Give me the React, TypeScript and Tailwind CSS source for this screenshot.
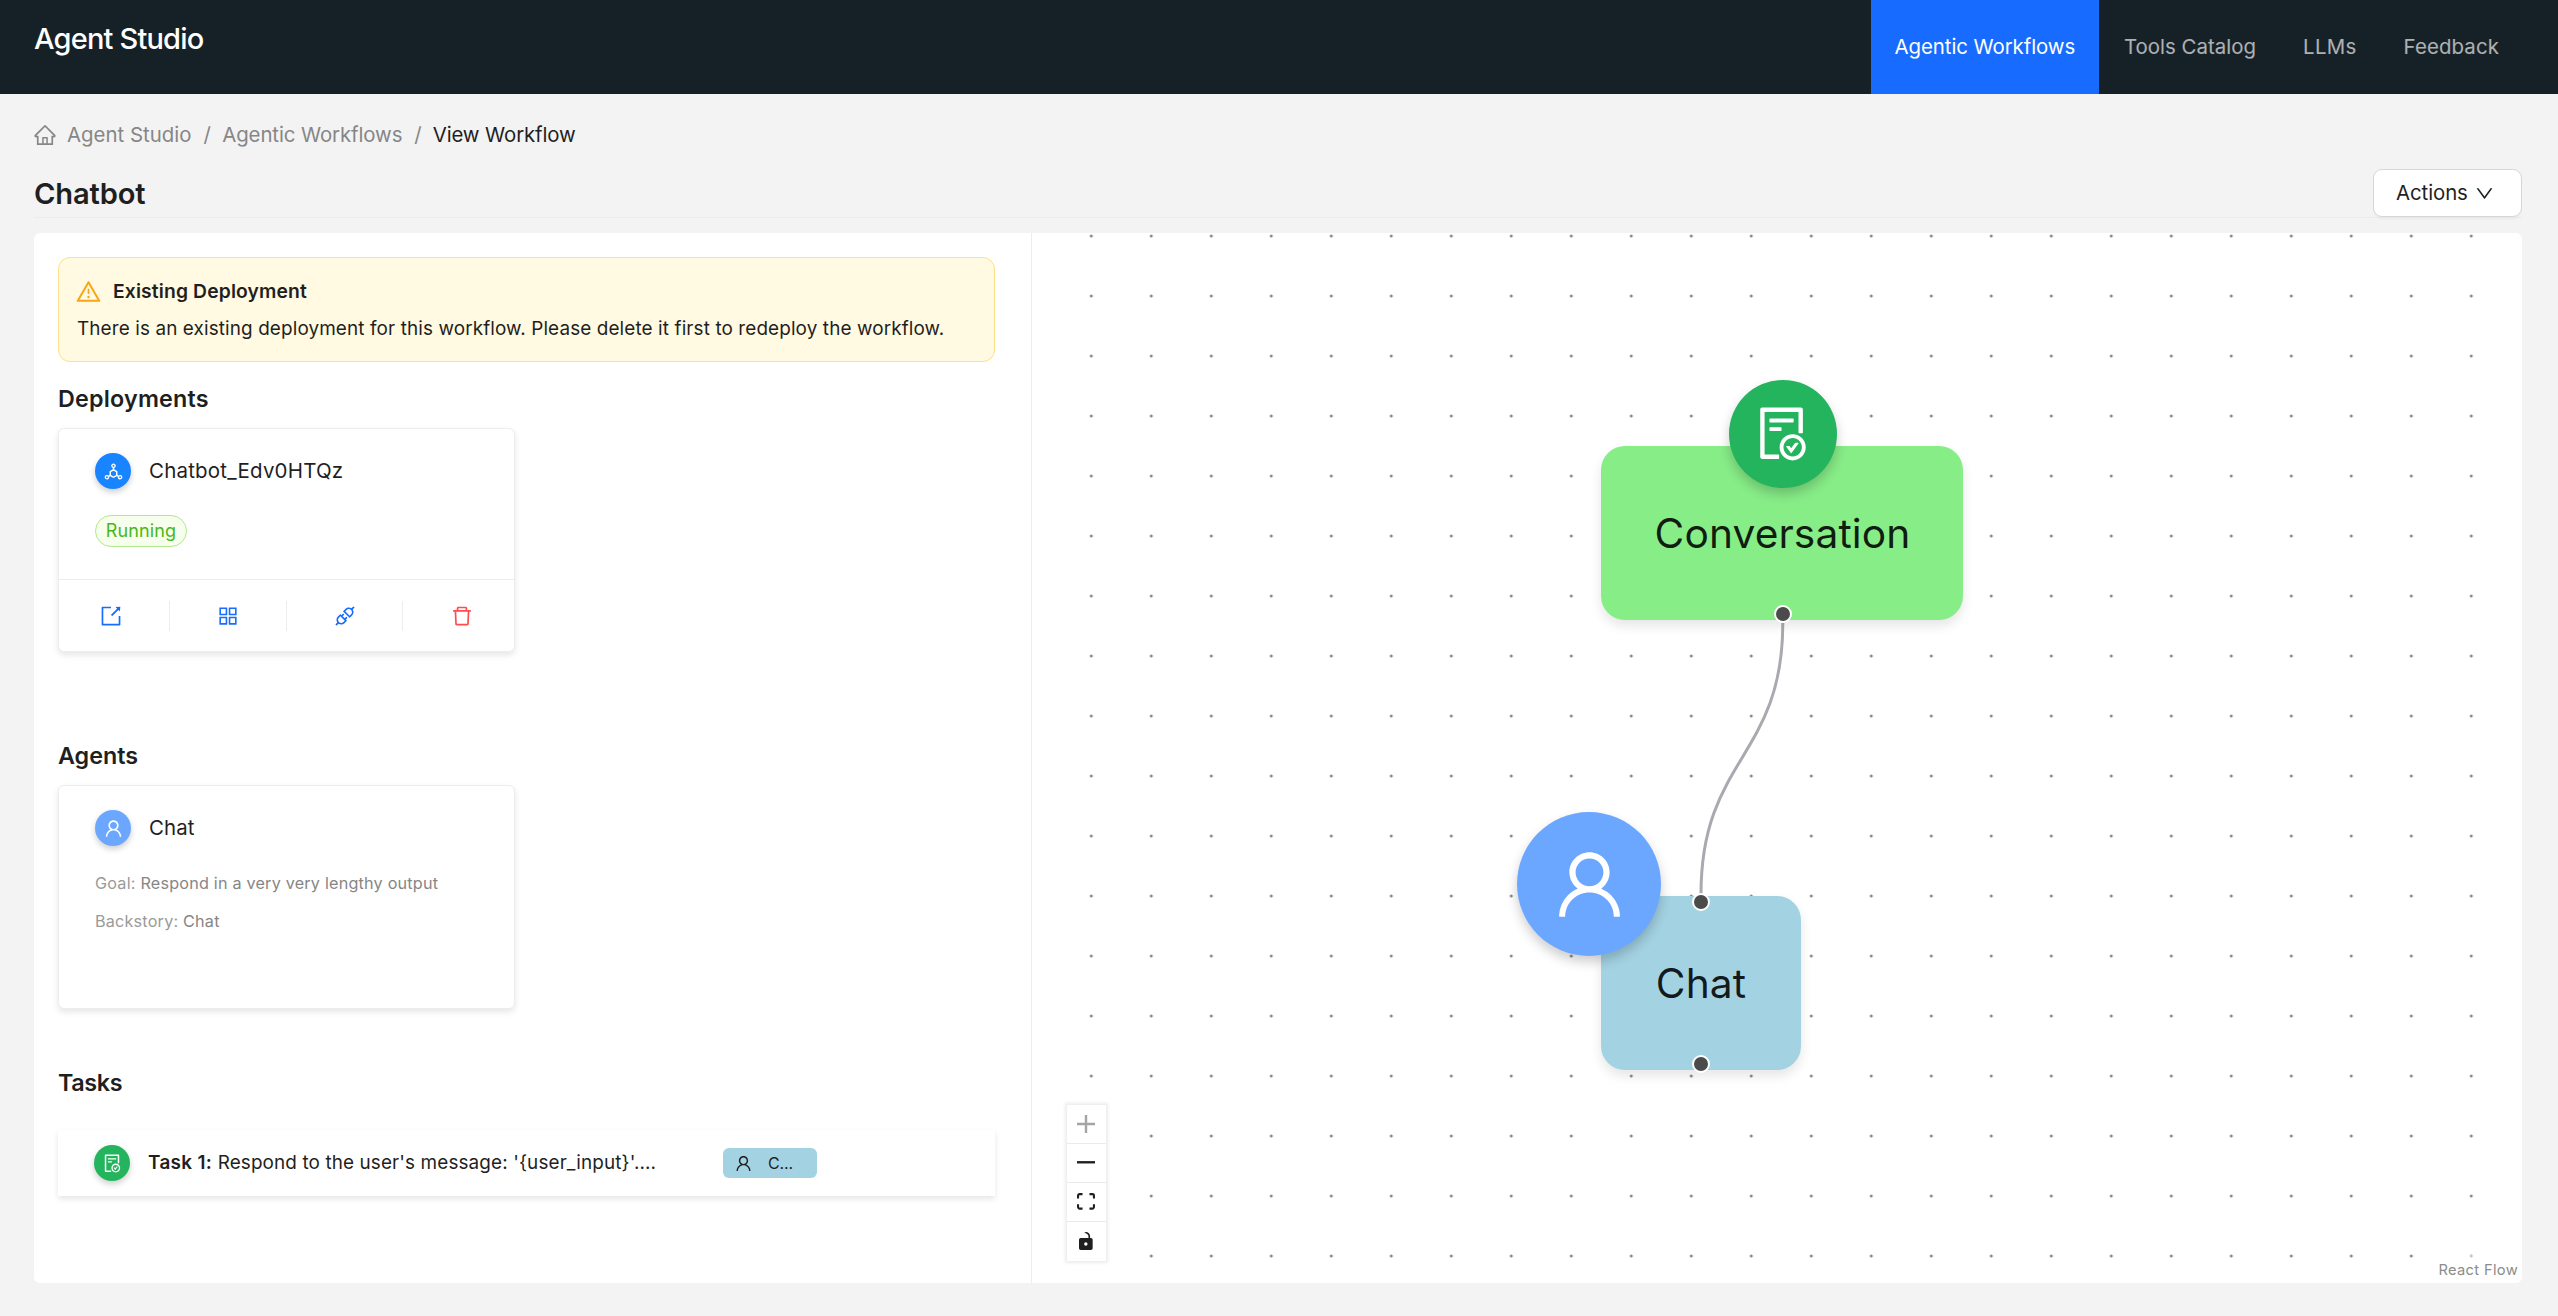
import React from "react";
import type { ReactNode } from "react";
import {
  AiOutlineApi,
  AiOutlineAppstore,
  AiOutlineDelete,
  AiOutlineDeploymentUnit,
  AiOutlineDown,
  AiOutlineExport,
  AiOutlineFileDone,
  AiOutlineHome,
  AiOutlineUser,
  AiOutlineWarning,
} from "react-icons/ai";

const INK = "text-[#1f1f1f]";

function Header() {
  return (
    <header className="flex h-[94px] items-start justify-between bg-[#162127] pl-[34px] pr-9">
      <div className="mt-[18px] text-[29px] font-medium leading-[42px] tracking-[-0.82px] text-white">
        Agent Studio
      </div>
      <nav className="flex h-full items-center text-[20.4px] text-white/65">
        <a className="flex h-full w-[228px] items-center justify-center bg-[#176cff] tracking-[-0.07px] text-white">
          Agentic Workflows
        </a>
        <a className="ml-[25px] tracking-[0.04px]">Tools Catalog</a>
        <a className="ml-[47px] tracking-[0.3px]">LLMs</a>
        <a className="ml-[47px] mr-[23px] tracking-[0.12px]">Feedback</a>
      </nav>
    </header>
  );
}

function Breadcrumb() {
  return (
    <div className="flex h-[34px] items-center text-[20.4px] text-[#868686]">
      <AiOutlineHome className="-ml-px size-6" />
      <span className="ml-[10px]">Agent Studio</span>
      <span className="ml-3">/</span>
      <span className="ml-[11.5px] tracking-[-0.1px]">Agentic Workflows</span>
      <span className="ml-3">/</span>
      <span className="ml-[11px] tracking-[-0.11px] text-[#1f1f1f]">View Workflow</span>
    </div>
  );
}

function TitleRow() {
  return (
    <div className="flex h-12 items-center justify-between">
      <h1 className="pt-px text-[29.1px] font-semibold tracking-[-0.14px] text-[#1f1f1f]">Chatbot</h1>
      <button className="flex h-12 w-[149px] items-center rounded-[9px] border border-[#d6d6d6] bg-white pl-[22px] text-[20.4px] tracking-[-0.08px] text-[#1f1f1f] shadow-[0_3px_0_rgba(0,0,0,0.02)]">
        Actions
        <AiOutlineDown className="ml-[6px] size-[21px]" />
      </button>
    </div>
  );
}

function Alert() {
  return (
    <div className="h-[105px] rounded-xl border border-[#fde08a] bg-[#fffae1] pl-[18px] pt-[19px]">
      <div className="flex h-7 items-center text-[19.3px] font-semibold tracking-[0.14px] text-[#1f1f1f]">
        <AiOutlineWarning className="-ml-0.5 mr-[11px] size-[27px] text-[#faa514]" />
        Existing Deployment
      </div>
      <p className="mt-[10px] h-7 whitespace-nowrap text-[18.9px] leading-7 tracking-[0.118px] text-[#1f1f1f]">
        There is an existing deployment for this workflow. Please delete it first to redeploy the workflow.
      </p>
    </div>
  );
}

function SectionTitle({ className, children }: { className: string; children: ReactNode }) {
  return <h2 className={`h-9 text-[23.3px] font-semibold leading-9 ${INK} ${className}`}>{children}</h2>;
}

function Badge({ className, children }: { className: string; children: ReactNode }) {
  return (
    <div
      className={`flex size-9 shrink-0 items-center justify-center rounded-full text-white shadow-[0_3px_6px_rgba(0,0,0,0.2)] ${className}`}
    >
      {children}
    </div>
  );
}

const cardClass =
  "h-56 w-[457px] rounded-md border border-[#ededed] bg-white shadow-[0_3px_6px_rgba(0,0,0,0.1)]";

function DeploymentCard() {
  const actions = [
    { key: "open", icon: <AiOutlineExport />, color: "text-[#176cff]" },
    { key: "apps", icon: <AiOutlineAppstore />, color: "text-[#176cff]" },
    { key: "api", icon: <AiOutlineApi />, color: "text-[#176cff]" },
    { key: "delete", icon: <AiOutlineDelete />, color: "text-[#ff4d4f]" },
  ];
  return (
    <div className={`mt-[11px] ${cardClass}`}>
      <div className="h-[150px] px-9 pt-6">
        <div className="flex items-center">
          <Badge className="bg-[#1884ff]">
            <AiOutlineDeploymentUnit className="size-[21px]" />
          </Badge>
          <span className="ml-[18px] pt-px text-[20.5px] tracking-[0.2px] text-[#1f1f1f]">Chatbot_Edv0HTQz</span>
        </div>
        <div className="mt-[26px] flex h-8 w-[92px] items-center justify-center rounded-full border border-[#b2e88e] bg-[#f6ffeb] pb-px text-[18px] tracking-[0.13px] text-[#46b81a]">
          Running
        </div>
      </div>
      <div className="flex h-[72px] items-center border-t border-[#ededed]">
        <div className="-mx-1.5 grid flex-1 grid-cols-4">
          {actions.map((a) => (
            <div
              key={a.key}
              className={`flex h-[30px] items-center justify-center border-r border-[#ededed] pl-px text-[24px] last:border-r-0 last:pl-0 ${a.color}`}
            >
              {a.icon}
            </div>
          ))}
        </div>
      </div>
    </div>
  );
}

function AgentCard() {
  return (
    <div className={`mt-[11px] px-9 pt-6 ${cardClass}`}>
      <div className="flex items-center">
        <Badge className="bg-[#6ca7ff]">
          <AiOutlineUser className="size-[21px]" />
        </Badge>
        <span className="ml-[18px] pt-px text-[20.4px] tracking-[0.09px] text-[#1f1f1f]">Chat</span>
      </div>
      <p className="mt-[25px] h-[25px] text-[16.2px] leading-[25px] tracking-[0.2px] text-[#868686]">
        <span className="text-[#9a9a9a]">Goal:</span> Respond in a very very lengthy output
      </p>
      <p className="mt-[13px] h-[25px] text-[16.2px] leading-[25px] tracking-[0.2px] text-[#868686]">
        <span className="text-[#9a9a9a]">Backstory:</span> Chat
      </p>
    </div>
  );
}

function TaskRow() {
  return (
    <div className="mt-[29px] flex h-[66px] items-center bg-white pl-9 shadow-[0_3px_6px_rgba(0,0,0,0.1)]">
      <Badge className="bg-[#24b45d]">
        <AiOutlineFileDone className="size-[21px]" />
      </Badge>
      <div className="ml-[18px] w-[575px] whitespace-nowrap pt-px text-[18.9px] tracking-[0.12px] text-[#1f1f1f]">
        <span className="font-semibold tracking-[0.34px]">Task 1:</span> Respond to the user's message:
        '&#123;user_input&#125;'....
      </div>
      <div className="flex h-[30px] w-[94px] items-center rounded-md bg-[#a3d2e2] pl-[11px] text-[16px] tracking-[-0.1px] text-[#1f1f1f]">
        <AiOutlineUser className="size-[19px]" />
        <span className="ml-[15px]">C...</span>
      </div>
    </div>
  );
}

function Handle({ className }: { className: string }) {
  return (
    <div
      className={`absolute size-[18px] -translate-x-1/2 -translate-y-1/2 rounded-full border-2 border-white bg-[#4b4b4b] ${className}`}
    />
  );
}

function Controls() {
  const items = [
    {
      key: "in",
      box: "0 0 32 32",
      size: "h-[18px] w-[18px] text-[#a5a5a5]",
      d: "M32 18.133H18.133V32h-4.266V18.133H0v-4.266h13.867V0h4.266v13.867H32z",
    },
    { key: "out", box: "0 0 32 5", size: "h-[3px] w-[18px]", d: "M0 0h32v4.2H0z" },
    {
      key: "fit",
      box: "0 0 32 30",
      size: "h-[17px] w-[18px]",
      d: "M3.692 4.63c0-.53.4-.938.939-.938h5.215V0H4.708C2.13 0 0 2.054 0 4.63v5.216h3.692V4.631zM27.354 0h-5.2v3.692h5.17c.53 0 .984.4.984.939v5.215H32V4.631A4.624 4.624 0 0027.354 0zm.954 24.83c0 .532-.4.94-.939.94h-5.215v3.768h5.215c2.577 0 4.631-2.13 4.631-4.707v-5.139h-3.692v5.139zm-23.677.94c-.531 0-.939-.4-.939-.94v-5.138H0v5.139c0 2.577 2.13 4.707 4.708 4.707h5.138V25.77H4.631z",
    },
    {
      key: "lock",
      box: "0 0 25 32",
      size: "h-[18px] w-[14px]",
      d: "M21.333 10.667H19.81V7.619C19.81 3.429 16.38 0 12.19 0c-4.114 1.828-1.37 2.133.305 2.438 1.676.305 4.42 2.59 4.42 5.181v3.048H3.047A3.056 3.056 0 000 13.714v15.238A3.056 3.056 0 003.048 32h18.285a3.056 3.056 0 003.048-3.048V13.714a3.056 3.056 0 00-3.048-3.047zM12.19 24.533a3.056 3.056 0 01-3.047-3.047 3.056 3.056 0 013.047-3.048 3.056 3.056 0 013.048 3.048 3.056 3.056 0 01-3.048 3.047z",
    },
  ];
  return (
    <div className="absolute bottom-[22px] left-[35px] w-[39px] divide-y divide-[#eaeaea] bg-white shadow-[0_0_3px_2px_rgba(0,0,0,0.08)]">
      {items.map((i) => (
        <div key={i.key} className="flex h-[39px] items-center justify-center pb-px pr-px text-[#1f1f1f]">
          <svg viewBox={i.box} className={i.size} fill="currentColor">
            <path d={i.d} />
          </svg>
        </div>
      ))}
    </div>
  );
}

function Canvas() {
  return (
    <div className="relative flex-1 overflow-hidden rounded-r-md">
      <svg className="absolute inset-0 size-full">
        <defs>
          <pattern id="dots" x="29.3" y="-27" width="60" height="60" patternUnits="userSpaceOnUse">
            <circle cx="30" cy="30" r="1.5" fill="#83838e" />
          </pattern>
        </defs>
        <rect x="10" width="100%" height="100%" fill="url(#dots)" />
        <path
          d="M750.8 390 C750.8 525 669 525 669 661"
          fill="none"
          stroke="#a9a9af"
          strokeWidth="3"
        />
      </svg>

      <div className="absolute left-[569px] top-[213px] flex h-[174px] w-[362px] items-center justify-center rounded-3xl bg-[#87ed87] pl-px pt-px text-[40.7px] tracking-[0.1px] text-black/88 shadow-[0_6px_12px_rgba(0,0,0,0.1)]">
        Conversation
        <div className="absolute left-[128px] top-[-66px] flex size-[108px] items-center justify-center rounded-full bg-[#24b45d] text-white shadow-[0_6px_12px_rgba(0,0,0,0.2)]">
          <AiOutlineFileDone className="size-[62px]" />
        </div>
        <Handle className="left-[182px] top-[168px]" />
      </div>

      <div className="absolute left-[569px] top-[663px] flex h-[174px] w-[200px] items-center justify-center rounded-3xl bg-[#a3d2e2] pt-px text-[40.7px] tracking-[0.1px] text-black/88 shadow-[0_6px_12px_rgba(0,0,0,0.1)]">
        Chat
        <div className="absolute left-[-84px] top-[-84px] flex size-36 items-center justify-center rounded-full bg-[#6ca7ff] text-white shadow-[0_6px_12px_rgba(0,0,0,0.2)]">
          <AiOutlineUser className="size-[83px]" />
        </div>
        <Handle className="left-[100px] top-[6px]" />
        <Handle className="left-[100px] top-[168px]" />
      </div>

      <Controls />
      <div className="absolute bottom-0 right-0 bg-white/50 px-[4px] pb-[2px] pt-[4px] text-[14.7px] leading-[22px] tracking-[0.33px] text-[#8c8c8c]">
        React Flow
      </div>
    </div>
  );
}

export default function App() {
  return (
    <div className="h-[1316px] w-[2558px] overflow-hidden bg-[#f3f3f3] font-['Inter',sans-serif]">
      <Header />
      <main className="pl-[34px] pr-9 pt-6">
        <Breadcrumb />
        <div className="mt-[17px]">
          <TitleRow />
        </div>
        <div className="h-px bg-[#ececec]" />
        <div className="mt-[15px] flex h-[1050px] rounded-md bg-white">
          <section className="w-[998px] border-r border-[#ededed] pl-6 pr-9 pt-6">
            <Alert />
            <SectionTitle className="mt-[19px] tracking-[0.2px]">Deployments</SectionTitle>
            <DeploymentCard />
            <SectionTitle className="mt-[86px]">Agents</SectionTitle>
            <AgentCard />
            <SectionTitle className="mt-14 tracking-[-0.36px]">Tasks</SectionTitle>
            <TaskRow />
          </section>
          <Canvas />
        </div>
      </main>
    </div>
  );
}
